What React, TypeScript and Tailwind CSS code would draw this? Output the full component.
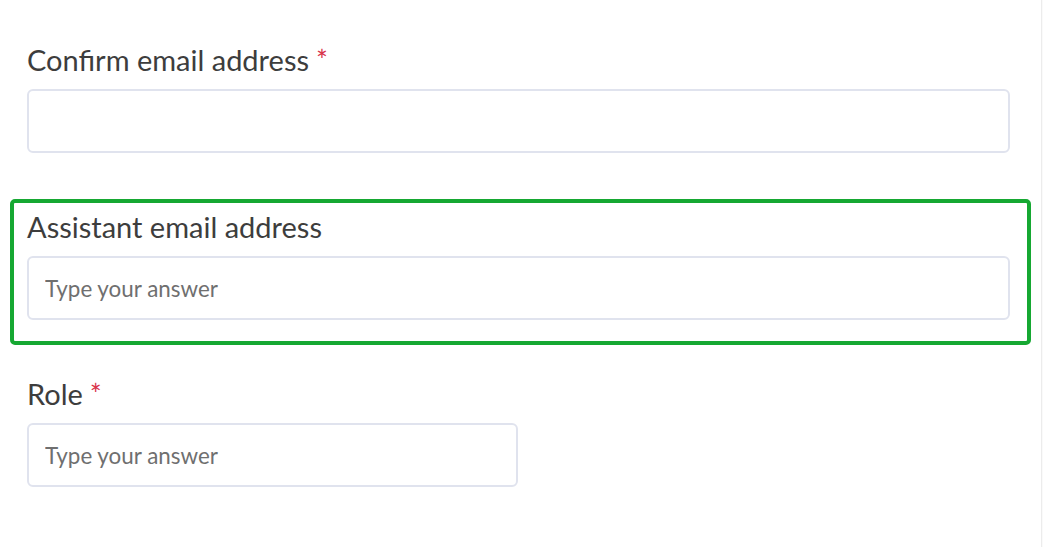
const FIELDS = [
  { label: "Confirm email address", required: true, placeholder: "", active: false, width: "w-full" },
  { label: "Assistant email address", required: false, placeholder: "Type your answer", active: true, width: "w-full" },
  { label: "Role", required: true, placeholder: "Type your answer", active: false, width: "w-[491px]" },
];

export default function App() {
  return (
    <div className="flex h-[547px] w-[1043px] font-['Lato',sans-serif]">
      <main className="flex w-[1041px] flex-col gap-[21px] bg-white px-[10px] pt-[32px]">
        {FIELDS.map((f) => (
          <div
            key={f.label}
            className={`rounded-[5px] border-4 pt-[5px] pb-[21px] pl-[13px] pr-[17px] ${
              f.active ? "border-[#16a832]" : "border-transparent"
            }`}
          >
            <label className="mb-[10px] block text-[29px] leading-[38px] text-[#3d3d3d]">
              {f.label}
              {f.required && <span className="ml-[7px] text-[28px] text-[#d8334a]">*</span>}
            </label>
            <input
              type="text"
              placeholder={f.placeholder}
              className={`${f.width} block h-[64px] rounded-[6px] border-2 border-[#e0e3ee] bg-white pl-4 text-[22.4px] text-[#3b3b3b] outline-none placeholder:text-[#6f6f6f]`}
            />
          </div>
        ))}
      </main>
      <div className="w-[2px] border-l border-[#ececec] bg-[#fafafa]" />
    </div>
  );
}
